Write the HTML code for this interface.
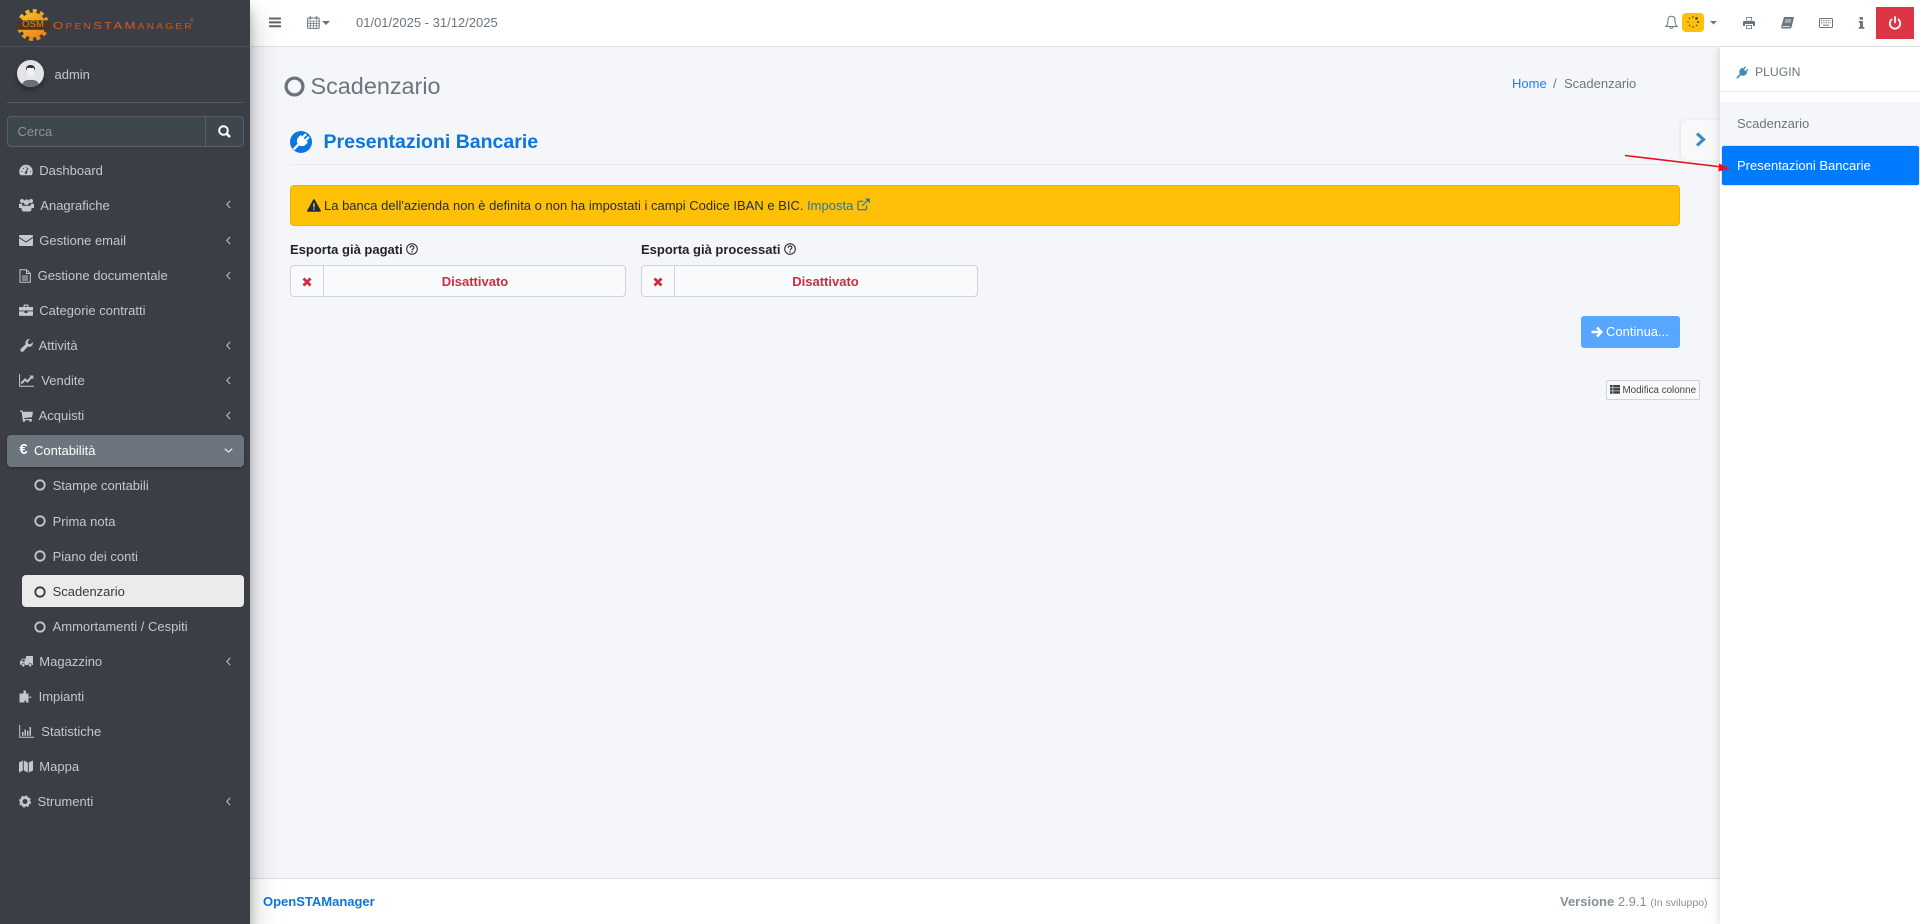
<!DOCTYPE html>
<html lang="it"><head><meta charset="utf-8"><title>Scadenzario</title>
<style>
*{box-sizing:border-box}
html,body{margin:0;padding:0;width:1920px;height:924px;overflow:hidden;background:#f4f6f9;font-family:"Liberation Sans",sans-serif;font-size:13px;color:#212529}
.a{position:absolute}
.t{position:absolute;white-space:nowrap;height:20px;line-height:20px}
svg{position:absolute;display:block;overflow:visible}
#side{position:absolute;left:0;top:0;width:250px;height:924px;background:#3b3f45;box-shadow:0 14px 28px rgba(0,0,0,.25),0 10px 10px rgba(0,0,0,.22);z-index:5;color:#c2c7d0}
#top{position:absolute;left:250px;top:0;width:1670px;height:47px;background:#fff;border-bottom:1px solid #dee2e6;color:#6c757d}
#right{position:absolute;left:1720px;top:47px;width:200px;height:877px;background:#fff;box-shadow:0 0 9px rgba(0,0,0,.18);clip-path:inset(0 0 0 -20px);z-index:3}
#foot{position:absolute;left:250px;top:878px;width:1470px;height:46px;background:#fff;border-top:1px solid #dee2e6}
</style></head><body>

<div id="top">
<svg style="left:19px;top:17px" width="12" height="11" viewBox="0 0 12 11" fill="#5f6770"><rect width="12" height="2" y=".5" rx=".5"/><rect width="12" height="2" y="4.400" rx=".5"/><rect width="12" height="2" y="8.300" rx=".5"/></svg>
<svg style="left:57px;top:16px" width="13" height="13" viewBox="0 0 13 13" fill="none" stroke="#6c757d"><rect x=".6" y="2" width="11.600" height="10.400" rx="1"/><path d="M.6 5h11.600M.6 7.400h11.600M.6 9.800h11.600M3.600 5v7.400M6.400 5v7.400M9.300 5v7.400" stroke-width=".7"/><path d="M3.300 .4v3M9.500 .4v3" stroke-width="1.600"/></svg>
<svg style="left:72px;top:21px" width="8" height="4" viewBox="0 0 8 4" fill="#6c757d"><path d="M0 0h8L4 4z"/></svg>
<div class="t" style="left:106px;top:13px">01/01/2025 - 31/12/2025</div>

<svg style="left:1415px;top:15px" width="13" height="15" viewBox="0 0 13 15" fill="none" stroke="#6c757d" stroke-width="1"><path d="M6.500 1.200C4 1.200 3 3 3 5.200C3 8.500 2.500 10 .9 11.500H12.100C10.500 10 10 8.500 10 5.200C10 3 9 1.200 6.500 1.200Z"/><path d="M5 12.200C5.200 13.700 7.800 13.700 8 12.200"/></svg>
<div class="a" style="left:1432px;top:13px;width:22px;height:19px;background:#ffc107;border-radius:4px"></div>
<svg style="left:1436px;top:15px" width="14" height="14" viewBox="0 0 14 14" fill="#343a40"><circle cx="7" cy="2" r=".8"/><circle cx="10.500" cy="3.400" r="1.300"/><circle cx="12" cy="7" r="1"/><circle cx="10.500" cy="10.500" r=".7"/><circle cx="7" cy="12" r=".7"/><circle cx="3.500" cy="10.500" r=".7"/><circle cx="2" cy="7" r=".7"/><circle cx="3.500" cy="3.500" r=".7"/></svg>
<svg style="left:1460px;top:21px" width="7" height="4" viewBox="0 0 7 4" fill="#6c757d"><path d="M0 0h7L3.500 3.500z"/></svg>
<svg style="left:1493px;top:17px" width="12" height="12" viewBox="0 0 12 12"><path fill="#6c757d" d="M3 0h6v3.500H3zM.8 4h10.400c.4 0 .8.400.8.800V9H10V7H2v2H0V4.800C0 4.400.4 4 .8 4zM3 8h6v4H3z"/><path fill="#fff" d="M3.800 .8h4.400v2.500H3.800zM3.800 8.700h4.400v2.500H3.800z"/></svg>
<svg style="left:1531px;top:17px" width="13" height="12" viewBox="0 0 13 12"><path fill="#6c757d" d="M3 0h9.500c.4 0 .5.300.4.600L10.600 10c-.2.800-.8 1.500-1.700 1.500H1.600C.6 11.500 0 10.600.2 9.700Z"/><path stroke="#fff" stroke-width=".7" d="M4.200 3h6M3.700 5h6M1.500 9.600h7.500"/></svg>
<svg style="left:1569px;top:18px" width="14" height="10" viewBox="0 0 14 10"><rect x=".5" y=".5" width="13" height="9" rx="1" fill="#fff" stroke="#6c757d"/><path stroke="#6c757d" stroke-width="1" stroke-dasharray="1 .7" d="M2 2.600h10M2 4.800h10"/><path stroke="#6c757d" d="M4 7.200h6"/></svg>
<svg style="left:1608px;top:17px" width="7" height="12" viewBox="0 0 7 12" fill="#6c757d"><rect x="1.600" width="3.400" height="2.700" rx=".4"/><path d="M.8 4h4.200v6H6.300v1.700H.8V10H2V5.700H.8z"/></svg>
<div class="a" style="left:1626px;top:7px;width:38px;height:32px;background:#dc3545"></div>
<svg style="left:1638px;top:16px" width="14" height="14" viewBox="0 0 14 14" fill="none" stroke="#fff" stroke-width="1.800" stroke-linecap="round"><path d="M7 1v5.500M3.600 3.500A5.200 5.200 0 1 0 10.400 3.500"/></svg>
</div>

<!-- main -->
<svg style="left:283.500px;top:75.500px" width="21" height="21" viewBox="0 0 21 21"><circle cx="10.500" cy="10.500" r="8.400" fill="none" stroke="#6c757d" stroke-width="3.300"/></svg>
<div class="t" style="left:310.500px;top:75.500px;font-size:23.400px;color:#6c757d">Scadenzario</div>
<div class="t" style="left:1512px;top:73.500px;color:#1b80ee">Home</div>
<div class="t" style="left:1553px;top:73.500px;color:#6c757d">/</div>
<div class="t" style="left:1564px;top:73.500px;color:#6c757d">Scadenzario</div>

<svg style="left:290px;top:131px" width="22" height="22" viewBox="0 0 22 22"><circle cx="11" cy="11" r="11" fill="#0c76e0"/><g transform="rotate(45 11 11)" fill="#fff"><rect x="7.800" y="1.800" width="2.300" height="5"/><rect x="11.900" y="1.800" width="2.300" height="5"/><path d="M5.800 6.300h10.400v3.200a5.200 5.200 0 0 1-10.400 0z"/><rect x="9.800" y="13.500" width="2.400" height="8"/></g></svg>
<div class="t" style="left:323.500px;top:132px;font-size:19.500px;font-weight:700;color:#0c76e0">Presentazioni Bancarie</div>
<div class="a" style="left:290px;top:164px;width:1390px;height:1px;background:#e6e9ed"></div>

<div class="a" style="left:290px;top:185px;width:1390px;height:41px;background:#ffc107;border:1px solid #edb100;border-radius:4px"></div>
<svg style="left:307px;top:199px" width="14" height="13" viewBox="0 0 14 13"><path fill="#1f2d3d" d="M7 .3c.4 0 .7.200.9.500l5.900 10.700c.3.600-.1 1.300-.8 1.300H1c-.7 0-1.100-.7-.8-1.300L6.100.8C6.300.5 6.600.3 7 .3z"/><path stroke="#ffc107" stroke-width="1.400" d="M7 4.300v4.200M7 9.500v1.500"/></svg>
<div class="t" style="left:324px;top:195.500px;color:#1f2d3d">La banca dell'azienda non è definita o non ha impostati i campi Codice IBAN e BIC. <span style="color:#1c7aa8">Imposta</span></div>
<svg style="left:857px;top:198px" width="13" height="13" viewBox="0 0 13 13" fill="none" stroke="#1c7aa8" stroke-width="1.200"><path d="M9.500 7.500v3c0 .8-.5 1.300-1.200 1.300H2.200C1.500 11.800 1 11.300 1 10.600V4.500c0-.7.500-1.200 1.200-1.200h4"/><path d="M5 8l6.500-6.500"/><path fill="#1c7aa8" stroke="none" d="M8 .5h4.800v4.800z"/></svg>

<div class="t" style="left:290px;top:239.500px;font-weight:700;color:#212529">Esporta già pagati</div>
<svg style="left:406px;top:243px" width="12" height="12" viewBox="0 0 12 12" fill="none" stroke="#212529"><circle cx="6" cy="6" r="5.300"/><path d="M4.200 4.700c0-2.300 3.700-2.300 3.700-.1 0 1.300-1.900 1.300-1.900 2.800" stroke-width="1.100"/><path d="M6 8.200v1.300" stroke-width="1.200"/></svg>
<div class="t" style="left:641px;top:239.500px;font-weight:700;color:#212529">Esporta già processati</div>
<svg style="left:784px;top:243px" width="12" height="12" viewBox="0 0 12 12" fill="none" stroke="#212529"><circle cx="6" cy="6" r="5.300"/><path d="M4.200 4.700c0-2.300 3.700-2.300 3.700-.1 0 1.300-1.900 1.300-1.900 2.800" stroke-width="1.100"/><path d="M6 8.200v1.300" stroke-width="1.200"/></svg>

<div class="a" style="left:290px;top:265px;width:336px;height:32px;background:#f9fafb;border:1px solid #ced4da;border-radius:4px"></div>
<div class="a" style="left:323px;top:265px;width:1px;height:32px;background:#ced4da"></div>
<svg style="left:302px;top:276.500px" width="10" height="10" viewBox="0 0 10 10"><path stroke="#cc2d40" stroke-width="2.800" d="M1.500 1.500l7 7M8.500 1.500l-7 7"/></svg>
<div class="t" style="left:324px;width:302px;text-align:center;top:271.500px;font-weight:700;color:#cc2d40">Disattivato</div>

<div class="a" style="left:641px;top:265px;width:337px;height:32px;background:#f9fafb;border:1px solid #ced4da;border-radius:4px"></div>
<div class="a" style="left:674px;top:265px;width:1px;height:32px;background:#ced4da"></div>
<svg style="left:653px;top:276.500px" width="10" height="10" viewBox="0 0 10 10"><path stroke="#cc2d40" stroke-width="2.800" d="M1.500 1.500l7 7M8.500 1.500l-7 7"/></svg>
<div class="t" style="left:674px;width:303px;text-align:center;top:271.500px;font-weight:700;color:#cc2d40">Disattivato</div>

<div class="a" style="left:1581px;top:316px;width:99px;height:32px;background:#57a6ff;border-radius:3px"></div>
<svg style="left:1591px;top:326px" width="12" height="12" viewBox="0 0 12 12"><path fill="none" stroke="#fff" stroke-width="2.400" d="M.5 6h9M6 1.500L10.300 6 6 10.500"/></svg>
<div class="t" style="left:1606px;top:321.500px;color:#fff">Continua...</div>

<div class="a" style="left:1606px;top:380px;width:94px;height:20px;background:#f8f9fa;border:1px solid #d0d3d6;border-radius:2px"></div>
<svg style="left:1610px;top:384.500px" width="10" height="9" viewBox="0 0 10 9" fill="#3d4145"><rect width="2.600" height="2.500"/><rect x="3.200" width="6.800" height="2.500"/><rect y="3.100" width="2.600" height="2.500"/><rect x="3.200" y="3.100" width="6.800" height="2.500"/><rect y="6.200" width="2.600" height="2.500"/><rect x="3.200" y="6.200" width="6.800" height="2.500"/></svg>
<div class="t" style="left:1622.500px;top:380.500px;font-size:9.800px;color:#444">Modifica colonne</div>

<!-- red arrow -->
<svg style="left:0;top:0;z-index:6" width="1920" height="924"><path d="M1625 155.500L1722 167" stroke="#e8101c" stroke-width="1.600" fill="none"/><path d="M1730 168.500L1719 163.500 1718.500 171.500z" fill="#e8101c"/></svg>

<!-- chevron tab -->
<div class="a" style="left:1681px;top:120px;width:39px;height:40px;background:#f8f9fb;border-radius:6px 0 0 6px;box-shadow:-1px 0 3px rgba(0,0,0,.07);z-index:2"></div>
<svg style="left:1695px;top:132px;z-index:4" width="11" height="15" viewBox="0 0 11 15"><path d="M2 1.500L8.500 7.500 2 13.500" fill="none" stroke="#3c8dbc" stroke-width="3.200"/></svg>

<!-- right panel -->
<div id="right">
<svg style="left:15px;top:18.500px" width="14" height="14" viewBox="0 0 14 14"><g transform="rotate(45 7 7)" fill="#3c8dbc"><rect x="4.600" y=".2" width="1.400" height="3.400"/><rect x="8" y=".2" width="1.400" height="3.400"/><path d="M3.200 3.200h7.600v2.300a3.800 3.800 0 0 1-7.600 0z"/><rect x="6.200" y="8.500" width="1.600" height="5.800"/></g></svg>
<div class="t" style="left:35px;top:15px;font-size:12.200px;color:#6c757d">PLUGIN</div>
<div class="a" style="left:0;top:44px;width:200px;height:1px;background:#e9ecef"></div>
<div class="a" style="left:0;top:55px;width:200px;height:44px;background:#f4f6f9"></div>
<div class="t" style="left:17px;top:67px;color:#6c757d">Scadenzario</div>
<div class="a" style="left:2px;top:99px;width:197px;height:39px;background:#007bff;border-radius:2px;box-shadow:0 0 0 1px #d9e6f5"></div>
<div class="t" style="left:17px;top:109px;color:#fff;z-index:7">Presentazioni Bancarie</div>
</div>

<!-- footer -->
<div id="foot"></div>
<div class="t" style="left:263px;top:892px;font-weight:700;color:#0c76e0">OpenSTAManager</div>
<div class="t" style="left:1560px;top:892px;color:#869099"><b>Versione</b> 2.9.1 <span style="font-size:10.500px">(In sviluppo)</span></div>

<!-- sidebar -->
<div id="side">
<div class="a" style="left:0;top:46px;width:250px;height:1px;background:#4b545c"></div>
<svg style="left:15px;top:6.500px" width="36" height="36" viewBox="0 0 36 36"><defs><linearGradient id="g" x1="0" y1="0" x2="1" y2="1"><stop offset="0" stop-color="#f5c32c"/><stop offset="1" stop-color="#ee7d18"/></linearGradient></defs><circle cx="18" cy="18" r="12.500" fill="url(#g)"/><circle cx="18" cy="18" r="14.200" fill="none" stroke="url(#g)" stroke-width="3.500" stroke-dasharray="4 3.400"/><rect x="2" y="13.300" width="33" height="9.500" fill="#4a3522"/></svg>
<div class="t" style="left:19px;top:15px;width:28px;text-align:center;font-size:9.500px;color:#e58a20;letter-spacing:.1px">OSM</div>
<div class="t" style="left:53px;top:15.500px;font-size:10.500px;color:#cf5a26;letter-spacing:1.850px;transform:scaleX(1.25);transform-origin:0 50%">O<span style="font-size:8px">PEN</span>STAM<span style="font-size:8px">ANAGER</span></div>
<div class="t" style="left:190px;top:11px;font-size:5px;color:#cf5a26">®</div>

<div class="a" style="left:17px;top:60px;width:27px;height:27px;border-radius:50%;background:#e3e4e6;box-shadow:0 3px 6px rgba(0,0,0,.35);overflow:hidden">
<div class="a" style="left:9px;top:5px;width:9px;height:5px;background:#34373b;border-radius:4px 4px 1px 1px"></div>
<div class="a" style="left:10px;top:8px;width:7px;height:9px;background:#f1f1f1;border-radius:0 0 4px 4px"></div>
<div class="a" style="left:5px;top:20px;width:17px;height:9px;background:#6a6e73;border-radius:6px 6px 0 0"></div></div>
<div class="t" style="left:54.500px;top:64.500px;font-size:13px">admin</div>
<div class="a" style="left:7px;top:102px;width:237px;height:1px;background:#4f5962"></div>

<div class="a" style="left:7px;top:116px;width:237px;height:31px;background:#3f474e;border:1px solid #56606a;border-radius:4px"></div>
<div class="a" style="left:205px;top:116px;width:1px;height:31px;background:#56606a"></div>
<div class="t" style="left:17.500px;top:121.500px;color:#8d949b">Cerca</div>
<svg style="left:218px;top:125px" width="13" height="13" viewBox="0 0 13 13" fill="none" stroke="#fff" stroke-width="2"><circle cx="5.500" cy="5.500" r="4.300"/><path d="M8.800 8.800l3.200 3.200" stroke-width="2.600"/></svg>

<div class="a" style="left:7px;top:435px;width:237px;height:32px;background:#6c757d;border-radius:4px;box-shadow:0 1px 3px rgba(0,0,0,.3)"></div>
<div class="a" style="left:22px;top:575px;width:222px;height:32px;background:#ebebeb;border-radius:4px"></div>

<!-- icons -->
<svg style="left:19px;top:164px" width="14" height="12" viewBox="0 0 14 12"><path fill="#c2c7d0" d="M7 .8C3.200.8 .3 3.900.3 7.500c0 1.300.3 2.500.9 3.500.1.200.3.300.6.300h10.400c.3 0 .5-.1.600-.3.600-1 .9-2.200.9-3.500C13.700 3.900 10.800.8 7 .8z"/><path stroke="#3b3f45" stroke-width="1.100" fill="none" d="M7 8.500L9 3.800M2.500 7.500h.9M4 4.200l.6.600M7 2.800v.9M10.900 7.500h.9"/><circle cx="7" cy="8.500" r="1.300" fill="#3b3f45"/></svg>
<svg style="left:19px;top:198px" width="15" height="14" viewBox="0 0 15 14" fill="#c2c7d0"><circle cx="3" cy="3" r="2"/><circle cx="12" cy="3" r="2"/><circle cx="7.500" cy="4.200" r="2.800"/><path d="M0 5.800h3.200c-.2 1.300.3 2.300 1 3L3 10H0zM15 5.800h-3.200c.2 1.300-.3 2.300-1 3L12 10h3z"/><path d="M4.200 7.800h6.600c1 0 1.700 1.200 1.700 3 0 1.700-.9 2.700-2 2.700H4.500c-1.100 0-2-1-2-2.700 0-1.800.7-3 1.700-3z"/></svg>
<svg style="left:19px;top:235px" width="14" height="11" viewBox="0 0 14 11"><path fill="#c2c7d0" d="M1 0h12c.6 0 1 .4 1 1v9c0 .6-.4 1-1 1H1c-.6 0-1-.4-1-1V1c0-.6.4-1 1-1z"/><path fill="none" stroke="#3b3f45" stroke-width="1" d="M0 2.400L7 7l7-4.600"/></svg>
<svg style="left:19px;top:269px" width="12" height="14" viewBox="0 0 12 14" fill="none" stroke="#c2c7d0" stroke-width="1"><path d="M1 .7h6.500l3.800 3.800v8.800H1z"/><path d="M7.500 .7v3.800h3.800M3 7h6M3 9h6M3 11h6"/></svg>
<svg style="left:19px;top:304px" width="14" height="12" viewBox="0 0 14 12"><path fill="#c2c7d0" d="M4.500 3V1.400C4.500.8 5 .5 5.500.5h3c.5 0 1 .3 1 .9V3H14v3.500H0V3zM5.700 3h2.600V1.700H5.700zM0 7.400h5.500V9h3V7.400H14V11c0 .5-.4.900-.9.900H.9c-.5 0-.9-.4-.9-.9z"/></svg>
<svg style="left:20px;top:339px" width="13" height="13" viewBox="0 0 13 13"><path fill="#c2c7d0" d="M12.800 3.200c.4 1.900-.6 3.800-2.400 4.400-.9.300-1.700.2-2.500-.1L3.500 12.300c-.8.800-2 .6-2.600-.1-.7-.7-.7-1.800 0-2.600l4.800-4.400c-.3-.8-.4-1.600-.1-2.500C6.200.9 8 0 9.800.2L7.600 2.500l.6 2.300 2.300.6z"/></svg>
<svg style="left:19px;top:374px" width="15" height="13" viewBox="0 0 15 13" fill="none" stroke="#c2c7d0"><path d="M.6 0v12.300H15" stroke-width="1"/><path d="M2.300 9.500l3.700-4 2.400 2 4.500-4.800" stroke-width="2"/><path d="M10.500 1.500h3.800v3.800z" fill="#c2c7d0" stroke="none"/></svg>
<svg style="left:20px;top:410px" width="13" height="12" viewBox="0 0 13 12"><path fill="#c2c7d0" d="M0 .5h2.500l.4 1.300H13l-1 5.500-8 .8.300.9h7.700v1.200H2.800L1.600 1.700H0z"/><circle cx="4" cy="10.800" r="1.200" fill="#c2c7d0"/><circle cx="10.500" cy="10.800" r="1.200" fill="#c2c7d0"/></svg>
<div class="t" style="left:19.500px;top:440px;color:#fff;font-weight:700;font-size:14.500px">€</div>
<svg style="left:34px;top:479px" width="12" height="12" viewBox="0 0 12 12"><circle cx="6" cy="6" r="4.700" fill="none" stroke="#c2c7d0" stroke-width="1.800"/></svg>
<svg style="left:34px;top:515px" width="12" height="12" viewBox="0 0 12 12"><circle cx="6" cy="6" r="4.700" fill="none" stroke="#c2c7d0" stroke-width="1.800"/></svg>
<svg style="left:34px;top:550px" width="12" height="12" viewBox="0 0 12 12"><circle cx="6" cy="6" r="4.700" fill="none" stroke="#c2c7d0" stroke-width="1.800"/></svg>
<svg style="left:34px;top:585.500px" width="12" height="12" viewBox="0 0 12 12"><circle cx="6" cy="6" r="4.700" fill="none" stroke="#343a40" stroke-width="1.800"/></svg>
<svg style="left:34px;top:620.500px" width="12" height="12" viewBox="0 0 12 12"><circle cx="6" cy="6" r="4.700" fill="none" stroke="#c2c7d0" stroke-width="1.800"/></svg>
<svg style="left:20px;top:656px" width="13" height="11" viewBox="0 0 13 11"><path fill="#c2c7d0" d="M6 0h6.300c.4 0 .7.300.7.700V9h-1.200a1.700 1.700 0 0 0-3.400 0H5a1.700 1.700 0 0 0-3.400 0H.7C.3 9 0 8.700 0 8.300V5.500L2.500 2.600H6zM1.500 5.500H4.700V3.500H3z"/><circle cx="3.300" cy="9.300" r="1.300" fill="#c2c7d0"/><circle cx="10.100" cy="9.300" r="1.300" fill="#c2c7d0"/></svg>
<svg style="left:19px;top:690px" width="13" height="13" viewBox="0 0 13 13"><path fill="#c2c7d0" d="M4.500 .5h2.500v3h2.500v3.200h3v1h-3v4.800H7V10.500H5.500v2H.5V3.500h4z"/></svg>
<svg style="left:19px;top:725px" width="15" height="13" viewBox="0 0 15 13" fill="#c2c7d0"><path d="M.2 0h1v11.700H15v1H.2z"/><rect x="3" y="7" width="1.500" height="3.800"/><rect x="5.500" y="4.500" width="1.500" height="6.300"/><rect x="8" y="5.800" width="1.500" height="5"/><rect x="10.500" y="2" width="1.500" height="8.800"/></svg>
<svg style="left:19px;top:760px" width="14" height="13" viewBox="0 0 14 13" fill="#c2c7d0"><path d="M0 2.500L3.800.5v10L0 12.500zM4.800.5l4 2v10l-4-2zM9.800 2.500L14 .5v10l-4.200 2z"/></svg>
<svg style="left:19px;top:795px" width="12" height="13" viewBox="0 0 12 13"><circle cx="6" cy="6.500" r="3.800" fill="none" stroke="#c2c7d0" stroke-width="2.600"/><circle cx="6" cy="6.500" r="5" fill="none" stroke="#c2c7d0" stroke-width="2" stroke-dasharray="2.200 1.730"/></svg>

<!-- chevrons -->
<svg style="left:226px;top:200px" width="5" height="9" viewBox="0 0 5 9"><path d="M4.200 .8L.8 4.500l3.400 3.700" fill="none" stroke="#c2c7d0" stroke-width="1"/></svg>
<svg style="left:226px;top:236px" width="5" height="9" viewBox="0 0 5 9"><path d="M4.200 .8L.8 4.500l3.400 3.700" fill="none" stroke="#c2c7d0" stroke-width="1"/></svg>
<svg style="left:226px;top:271px" width="5" height="9" viewBox="0 0 5 9"><path d="M4.200 .8L.8 4.500l3.400 3.700" fill="none" stroke="#c2c7d0" stroke-width="1"/></svg>
<svg style="left:226px;top:341px" width="5" height="9" viewBox="0 0 5 9"><path d="M4.200 .8L.8 4.500l3.400 3.700" fill="none" stroke="#c2c7d0" stroke-width="1"/></svg>
<svg style="left:226px;top:376px" width="5" height="9" viewBox="0 0 5 9"><path d="M4.200 .8L.8 4.500l3.400 3.700" fill="none" stroke="#c2c7d0" stroke-width="1"/></svg>
<svg style="left:226px;top:411px" width="5" height="9" viewBox="0 0 5 9"><path d="M4.200 .8L.8 4.500l3.400 3.700" fill="none" stroke="#c2c7d0" stroke-width="1"/></svg>
<svg style="left:224px;top:448px" width="9" height="5" viewBox="0 0 9 5"><path d="M.8 .8l3.700 3.200L8.200 .8" fill="none" stroke="#fff" stroke-width="1"/></svg>
<svg style="left:226px;top:657px" width="5" height="9" viewBox="0 0 5 9"><path d="M4.200 .8L.8 4.500l3.400 3.700" fill="none" stroke="#c2c7d0" stroke-width="1"/></svg>
<svg style="left:226px;top:797px" width="5" height="9" viewBox="0 0 5 9"><path d="M4.200 .8L.8 4.500l3.400 3.700" fill="none" stroke="#c2c7d0" stroke-width="1"/></svg>

<!-- labels -->
<div class="t" style="left:39.300px;top:160.500px">Dashboard</div>
<div class="t" style="left:40.300px;top:195.500px">Anagrafiche</div>
<div class="t" style="left:39.300px;top:230.500px">Gestione email</div>
<div class="t" style="left:37.600px;top:265.500px">Gestione documentale</div>
<div class="t" style="left:39.300px;top:300.500px">Categorie contratti</div>
<div class="t" style="left:38.600px;top:335.500px">Attività</div>
<div class="t" style="left:41.300px;top:370.500px">Vendite</div>
<div class="t" style="left:38.600px;top:405.500px">Acquisti</div>
<div class="t" style="left:34px;top:440.500px;color:#fff">Contabilità</div>
<div class="t" style="left:52.600px;top:475.500px">Stampe contabili</div>
<div class="t" style="left:52.600px;top:511.500px">Prima nota</div>
<div class="t" style="left:52.600px;top:546.500px">Piano dei conti</div>
<div class="t" style="left:52.600px;top:581.500px;color:#343a40">Scadenzario</div>
<div class="t" style="left:52.600px;top:616.500px">Ammortamenti / Cespiti</div>
<div class="t" style="left:39.300px;top:651.500px">Magazzino</div>
<div class="t" style="left:38.600px;top:686.500px">Impianti</div>
<div class="t" style="left:41.300px;top:721.500px">Statistiche</div>
<div class="t" style="left:39.300px;top:756.500px">Mappa</div>
<div class="t" style="left:37.600px;top:791.500px">Strumenti</div>
</div>
</body></html>
